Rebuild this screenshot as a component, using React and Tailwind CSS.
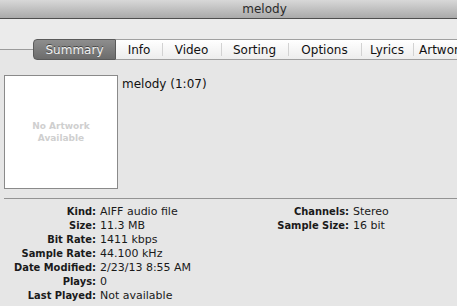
import React from 'react';

const tabs = [
  { label: 'Summary', w: 'w-[83px]' },
  { label: 'Info', w: 'w-[46px]' },
  { label: 'Video', w: 'w-[59px]' },
  { label: 'Sorting', w: 'w-[67px]' },
  { label: 'Options', w: 'w-[73px]' },
  { label: 'Lyrics', w: 'w-[52px]' },
  { label: 'Artwork', w: 'w-[72px]' },
];

const leftRows = [
  ['Kind:', 'AIFF audio file'],
  ['Size:', '11.3 MB'],
  ['Bit Rate:', '1411 kbps'],
  ['Sample Rate:', '44.100 kHz'],
  ['Date Modified:', '2/23/13 8:55 AM'],
  ['Plays:', '0'],
  ['Last Played:', 'Not available'],
];

const rightRows = [
  ['Channels:', 'Stereo'],
  ['Sample Size:', '16 bit'],
];

const InfoRows = ({ rows, labelW }) => (
  <div className="flex flex-col">
    {rows.map(([k, v]) => (
      <div key={k} className="flex h-[14px] items-center text-[11px] leading-[14px] text-[#1a1a1a]">
        <span
          className={`${labelW} shrink-0 text-right font-bold`}
          style={{ fontFamily: '"DejaVu Sans Condensed", "DejaVu Sans", sans-serif' }}
        >
          {k}
        </span>
        <span className="ml-[4px] whitespace-nowrap">{v}</span>
      </div>
    ))}
  </div>
);

export default function App() {
  return (
    <div
      className="w-[457px] h-[306px] overflow-hidden bg-[#e6e6e6] flex flex-col"
      style={{ fontFamily: '"DejaVu Sans", sans-serif' }}
    >
      {/* title bar */}
      <div className="h-[19px] shrink-0 bg-gradient-to-b from-[#d8d8d8] to-[#aaaaaa] border-b border-[#4e4e4e] flex items-center justify-center pl-[72px]">
        <span className="text-[12px] leading-[14px] text-[#2a2a2a]">melody</span>
      </div>

      <div className="h-[20px] shrink-0 bg-[#ebebeb]" />

      {/* tab strip */}
      <div className="h-[21px] shrink-0 flex items-center relative overflow-hidden">
        <div className="absolute left-0 right-0 top-0 h-[10px] bg-[#ebebeb]" />
        <div className="relative w-[33px] h-px bg-[#9b9b9b] shrink-0" />
        {tabs.map((t, i) =>
          i === 0 ? (
            <div
              key={t.label}
              className={`relative ${t.w} h-[21px] shrink-0 rounded-l-[4px] border border-[#5a5a5a] bg-gradient-to-b from-[#8e8e8e] to-[#6c6c6c] flex items-center justify-center text-[12px] text-[#f2f2f2] [text-shadow:0_-1px_0_#444]`}
            >
              {t.label}
            </div>
          ) : (
            <div
              key={t.label}
              className={`relative ${t.w} h-[21px] shrink-0 border-y border-[#a0a0a0] bg-gradient-to-b from-[#ffffff] to-[#ededed] flex items-center ${i === 6 ? 'pl-[6px]' : 'justify-center'} text-[12px] text-[#111]`}
            >
              {i > 1 && <div className="absolute left-0 top-[3px] bottom-[3px] w-px bg-[#d2d2d2]" />}
              {t.label}
            </div>
          )
        )}
      </div>

      {/* artwork + title */}
      <div className="flex mt-[15px] shrink-0">
        <div className="ml-[4px] w-[114px] h-[114px] border border-[#8a8a8a] bg-white flex flex-col items-center justify-center text-[9px] leading-[12px] font-bold text-[#cfcfcf]">
          <span>No Artwork</span>
          <span>Available</span>
        </div>
        <div className="ml-[4px] mt-[2px] text-[12px] leading-[14px] text-[#111]">melody (1:07)</div>
      </div>

      <div className="ml-[4px] mt-[9px] h-px bg-[#939393] shrink-0" />

      {/* info */}
      <div className="flex mt-[6px]">
        <div className="w-[253px] shrink-0">
          <InfoRows rows={leftRows} labelW="w-[96px]" />
        </div>
        <InfoRows rows={rightRows} labelW="w-[96px]" />
      </div>
    </div>
  );
}
